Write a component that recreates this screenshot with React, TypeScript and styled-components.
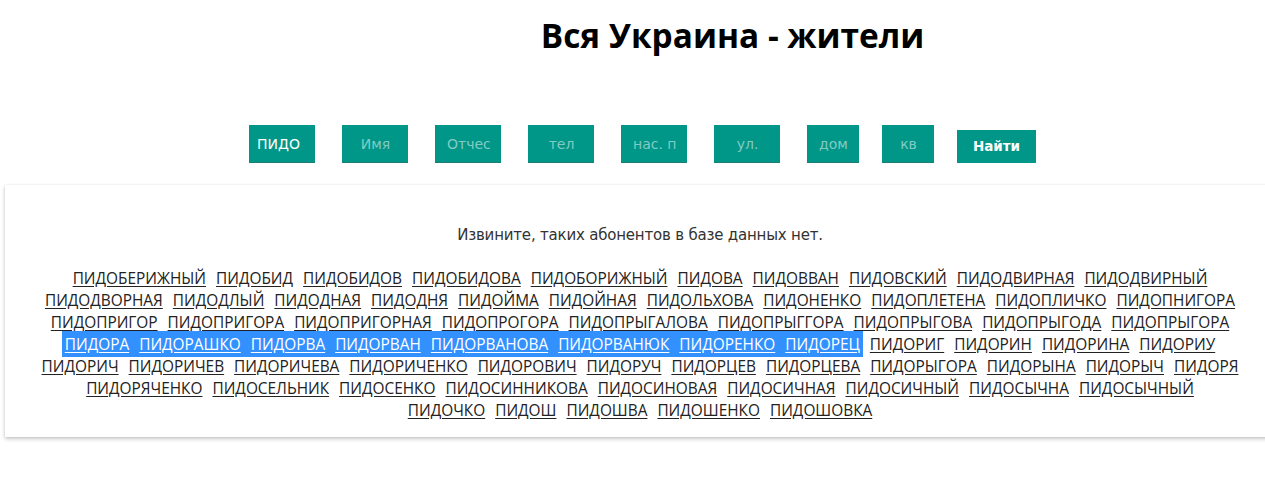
import React from "react";
import styled, { createGlobalStyle } from "styled-components";

const Global = createGlobalStyle`
  html, body { margin: 0; padding: 0; background: #fff; overflow: hidden; }
  body { font-family: "Open Sans", "Noto Sans", sans-serif; color: #222; }
`;

const Page = styled.div`
  width: 1265px;
  height: 496px;
  overflow: hidden;
`;

const Header = styled.header`
  padding: 13px 0 0 200px;
  text-align: center;
`;

const Title = styled.h1`
  margin: 0;
  font-family: "Open Sans", "Noto Sans", sans-serif;
  font-weight: 700;
  font-size: 33.4px;
  line-height: 45px;
  color: #000;
`;

const Form = styled.form`
  display: flex;
  justify-content: flex-start;
  align-items: center;
  padding-left: 249px;
  margin-top: 67px;
  height: 38px;
`;

const Field = styled.input<{ $w: number; $gap: number }>`
  box-sizing: border-box;
  width: ${(p) => p.$w}px;
  height: 38px;
  margin-right: ${(p) => p.$gap}px;
  padding: 0 8px;
  border: none;
  border-bottom: 1px solid #1f7d74;
  background: #009688;
  color: #fff;
  font-family: "DejaVu Sans", Verdana, sans-serif;
  font-size: 14px;
  outline: none;
  &::placeholder { color: #80ccc4; text-align: center; }
  &:placeholder-shown { padding: 0 11px 0 12px; }
`;

const Button = styled.button`
  box-sizing: border-box;
  width: 79px;
  height: 33px;
  border: none;
  background: #009688;
  color: #fff;
  font-family: "DejaVu Sans", Verdana, sans-serif;
  font-weight: 700;
  font-size: 13.5px;
  margin-top: 4px;
`;

const Panel = styled.section`
  margin: 22px 0 0 5px;
  width: 1270px;
  box-sizing: border-box;
  padding: 39px 0 15px;
  background: #fff;
  box-shadow: 0 2px 4px rgba(0, 0, 0, 0.22), 0 0 2px rgba(0, 0, 0, 0.08);
  text-align: center;
`;

const Message = styled.p`
  margin: 0 0 22px;
  font-size: 15px;
  line-height: 22px;
  color: #333;
  font-family: "DejaVu Sans", Verdana, sans-serif;
  letter-spacing: -0.2px;
`;

const Row = styled.div`
  font-size: 15.4px;
  line-height: 22px;
  white-space: nowrap;
`;

const Name = styled.a`
  color: #222;
  text-decoration: underline;
  text-underline-offset: 2px;
  margin: 0 3px;
  cursor: pointer;
`;

const Selected = styled.span`
  background: #3390ff;
  padding: 3px 0 2px;
  & a { color: #fff; }
`;

const rows: string[][] = [
  ["ПИДОБЕРИЖНЫЙ", "ПИДОБИД", "ПИДОБИДОВ", "ПИДОБИДОВА", "ПИДОБОРИЖНЫЙ", "ПИДОВА", "ПИДОВВАН", "ПИДОВСКИЙ", "ПИДОДВИРНАЯ", "ПИДОДВИРНЫЙ"],
  ["ПИДОДВОРНАЯ", "ПИДОДЛЫЙ", "ПИДОДНАЯ", "ПИДОДНЯ", "ПИДОЙМА", "ПИДОЙНАЯ", "ПИДОЛЬХОВА", "ПИДОНЕНКО", "ПИДОПЛЕТЕНА", "ПИДОПЛИЧКО", "ПИДОПНИГОРА"],
  ["ПИДОПРИГОР", "ПИДОПРИГОРА", "ПИДОПРИГОРНАЯ", "ПИДОПРОГОРА", "ПИДОПРЫГАЛОВА", "ПИДОПРЫГГОРА", "ПИДОПРЫГОВА", "ПИДОПРЫГОДА", "ПИДОПРЫГОРА"],
  [],
  ["ПИДОРИЧ", "ПИДОРИЧЕВ", "ПИДОРИЧЕВА", "ПИДОРИЧЕНКО", "ПИДОРОВИЧ", "ПИДОРУЧ", "ПИДОРЦЕВ", "ПИДОРЦЕВА", "ПИДОРЫГОРА", "ПИДОРЫНА", "ПИДОРЫЧ", "ПИДОРЯ"],
  ["ПИДОРЯЧЕНКО", "ПИДОСЕЛЬНИК", "ПИДОСЕНКО", "ПИДОСИННИКОВА", "ПИДОСИНОВАЯ", "ПИДОСИЧНАЯ", "ПИДОСИЧНЫЙ", "ПИДОСЫЧНА", "ПИДОСЫЧНЫЙ"],
  ["ПИДОЧКО", "ПИДОШ", "ПИДОШВА", "ПИДОШЕНКО", "ПИДОШОВКА"],
];

const selectedNames = ["ПИДОРА", "ПИДОРАШКО", "ПИДОРВА", "ПИДОРВАН", "ПИДОРВАНОВА", "ПИДОРВАНЮК", "ПИДОРЕНКО", "ПИДОРЕЦ"];
const afterSelected = ["ПИДОРИГ", "ПИДОРИН", "ПИДОРИНА", "ПИДОРИУ"];

const renderNames = (names: string[]) =>
  names.map((n, i) => (
    <React.Fragment key={n}>
      {i > 0 ? " " : ""}
      <Name>{n}</Name>
    </React.Fragment>
  ));

const fields = [
  { ph: "Имя", w: 66, gap: 27 },
  { ph: "Отчество", w: 66, gap: 27 },
  { ph: "тел", w: 66, gap: 27 },
  { ph: "нас. пункт", w: 66, gap: 27 },
  { ph: "ул.", w: 66, gap: 27 },
  { ph: "дом", w: 52, gap: 23 },
  { ph: "кв", w: 52, gap: 23 },
];

export default function App() {
  return (
    <Page>
      <Global />
      <Header>
        <Title>Вся Украина - жители</Title>
      </Header>
      <Form onSubmit={(e) => e.preventDefault()}>
        <Field $w={66} $gap={27} defaultValue="ПИДО" />
        {fields.map((f) => (
          <Field key={f.ph} $w={f.w} $gap={f.gap} placeholder={f.ph} />
        ))}
        <Button type="submit">Найти</Button>
      </Form>
      <Panel>
        <Message>Извините, таких абонентов в базе данных нет.</Message>
        {rows.map((r, idx) =>
          idx === 3 ? (
            <Row key={idx}>
              <Selected>{renderNames(selectedNames)}</Selected> {renderNames(afterSelected)}
            </Row>
          ) : (
            <Row key={idx}>{renderNames(r)}</Row>
          )
        )}
      </Panel>
    </Page>
  );
}
